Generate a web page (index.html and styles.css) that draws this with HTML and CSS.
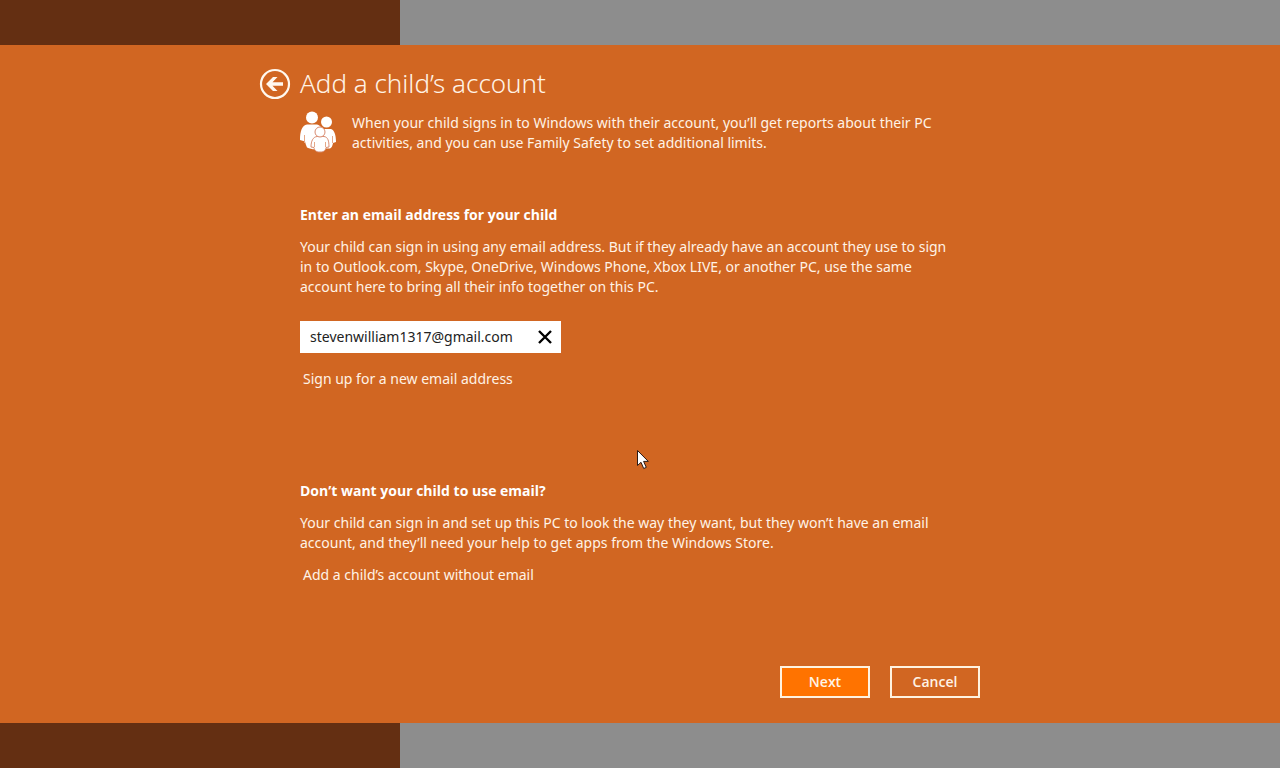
FILE: index.html
```html
<!DOCTYPE html>
<html lang="en">
<head>
    <meta charset="UTF-8">
    <meta name="viewport" content="width=device-width, initial-scale=1.0">
    <title>Add a child's account</title>
    <link rel="stylesheet" href="styles.css">
</head>
<body>
    <main class="dialog">
        <form class="content">
            <header class="title-row">
                <button type="button" class="back" aria-label="Back">
                    <svg width="32" height="32" viewBox="0 0 32 32">
                        <circle cx="16" cy="16" r="14" fill="none" stroke="currentColor" stroke-width="2.2"/>
                        <path d="M7 16l7-7h4.500l-5 5.200H24v3.600H13.500l5 5.200H14z" fill="currentColor"/>
                    </svg>
                </button>
                <h1>Add a child’s account</h1>
            </header>

            <div class="body">
                <!-- Family Safety intro -->
                <div class="intro">
                    <svg class="family" width="38" height="42" viewBox="0 0 38 42">
                        <path d="M0 29c0-9 2-14.500 7-15.500h10c4 1 6 5 6 10v12c-3 3-10 4-16 1-1-2-1.500-4-2-6z" fill="#fff"/>
                        <path d="M20 23c0-3 2-5 4-5h7c3 1 5 5 5 13l-3 1c-.500 3-1.500 5-3 5.500H20z" fill="#fff"/>
                        <circle cx="12" cy="6.500" r="6" fill="#fff"/>
                        <circle cx="26.500" cy="11" r="5.500" fill="#fff"/>
                        <path d="M4.500 24v8M23 20v5M32.500 25v7" fill="none" stroke="#e5a888" stroke-width="1"/>
                        <g fill="#fff" stroke="#d98b70" stroke-width="1">
                            <path d="M11 36c0-6 2-10 6-10.500h7c4 .500 5 4.500 5 10.500l-3 .500c-.500 3-2 4.500-6 4.500s-5.500-1.500-6-4.500z"/>
                            <circle cx="20" cy="21" r="5"/>
                        </g>
                        <path d="M14.500 31v5M25.500 31v5" fill="none" stroke="#e5a888" stroke-width="1"/>
                    </svg>
                    <p>When your child signs in to Windows with their account, you’ll get reports about their PC activities, and you can use Family Safety to set additional limits.</p>
                </div>

                <!-- Sign in with email -->
                <section class="email-section">
                    <h2><label for="email">Enter an email address for your child</label></h2>
                    <p>Your child can sign in using any email address. But if they already have an account they use to sign in to Outlook.com, Skype, OneDrive, Windows Phone, Xbox LIVE, or another PC, use the same account here to bring all their info together on this PC.</p>
                    <div class="field">
                        <input type="text" id="email" value="stevenwilliam1317@gmail.com">
                        <button type="button" class="clear" aria-label="Clear">
                            <svg width="14" height="14" viewBox="0 0 14 14">
                                <path d="M1 1l12 12M13 1L1 13" fill="none" stroke="currentColor" stroke-width="2.400"/>
                            </svg>
                        </button>
                    </div>
                    <a href="#">Sign up for a new email address</a>
                </section>

                <!-- Account without email -->
                <section>
                    <h2>Don’t want your child to use email?</h2>
                    <p>Your child can sign in and set up this PC to look the way they want, but they won’t have an email account, and they’ll need your help to get apps from the Windows Store.</p>
                    <a href="#">Add a child’s account without email</a>
                </section>
            </div>

            <div class="buttons">
                <button type="submit" class="btn primary">Next</button>
                <button type="button" class="btn">Cancel</button>
            </div>
        </form>
    </main>

    <svg class="cursor" width="14" height="21" viewBox="0 0 14 21">
        <path d="M1.500 1.500v15l3.500-3.200 2.700 6.200 2.600-1.100-2.700-6h4.700z" fill="#fff" stroke="#2b1a14" stroke-width="1"/>
    </svg>
</body>
</html>
```
FILE: styles.css
```css
* {
    box-sizing: border-box;
}
body {
    font-family: "Noto Sans", "Open Sans", sans-serif;
    font-size: 14px;
    line-height: 20px;
    color: #fff3e6;
    background: linear-gradient(to right, #642f12 400px, #8d8d8d 400px);
    margin: 0;
    min-height: 100vh;
    display: flex;
    flex-direction: column;
    justify-content: center;
}
h1, h2, p {
    margin: 0;
}
button {
    font: inherit;
    color: inherit;
    background: none;
    border: none;
    padding: 0;
    cursor: pointer;
}
svg {
    display: block;
}
a {
    color: inherit;
    text-decoration: none;
    margin-left: 3px;
}
a:hover {
    text-decoration: underline;
}
.dialog {
    background-color: #d16622;
    padding: 20px 20px 25px 260px;
}
.content {
    max-width: 720px;
}
.title-row {
    display: flex;
    align-items: center;
    gap: 9px;
    height: 38px;
}
.back {
    margin-left: -1px;
    color: #fff8ef;
}
h1 {
    font-size: 26px;
    font-weight: 300;
    line-height: 36px;
    padding-bottom: 2px;
}
.body {
    padding: 8px 20px 0 40px;
}
.intro {
    display: flex;
    gap: 14px;
    margin-bottom: 52px;
}
.intro p {
    flex: 1;
    max-width: 600px;
    padding-top: 2px;
}
h2 {
    font-family: "Open Sans", "Noto Sans", sans-serif;
    font-size: 14px;
    font-weight: 700;
    line-height: 20px;
    color: #fff;
    margin-bottom: 12px;
}
section p {
    max-width: 655px;
    margin-bottom: 12px;
}
.email-section {
    margin-bottom: 92px;
}
.field {
    display: flex;
    width: 261px;
    height: 32px;
    background-color: #fff;
    margin: 24px 0 16px;
}
.field input {
    flex: 1;
    min-width: 0;
    font: inherit;
    color: #222;
    background: none;
    border: none;
    outline: none;
    padding: 0 0 0 10px;
}
.clear {
    width: 32px;
    display: flex;
    align-items: center;
    justify-content: center;
    color: #000;
}
.buttons {
    display: flex;
    justify-content: flex-end;
    gap: 20px;
    margin-top: 81px;
}
.btn {
    width: 90px;
    height: 32px;
    font-family: "Open Sans", "Noto Sans", sans-serif;
    font-weight: 600;
    border: 2px solid #fff3e0;
}
.btn.primary {
    background-color: #ff7300;
}
.cursor {
    position: absolute;
    left: 636px;
    top: 449px;
    pointer-events: none;
}
```
